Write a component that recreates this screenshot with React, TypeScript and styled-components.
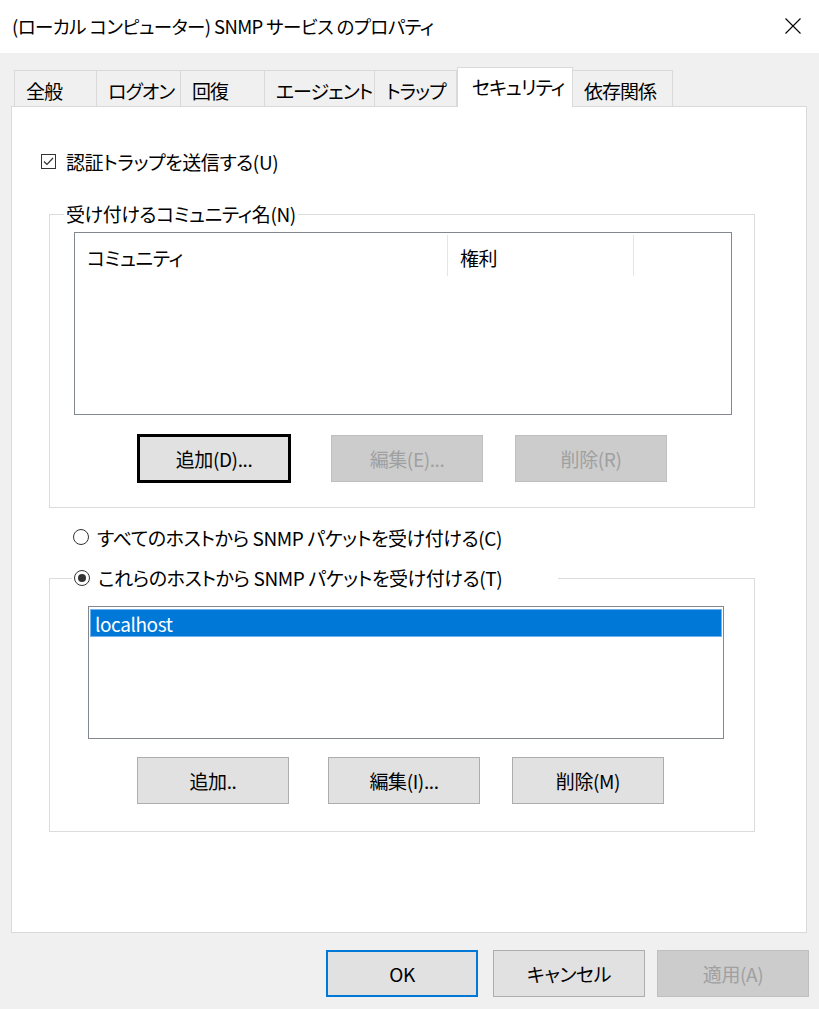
import React from "react";
import styled, { createGlobalStyle } from "styled-components";

const Global = createGlobalStyle`
  html, body { margin: 0; padding: 0; background: #f0f0f0; }
  body {
    font-family: "Noto Sans CJK JP", "Noto Sans", sans-serif;
    font-feature-settings: "palt";
    font-size: 19px;
    letter-spacing: -0.4px;
    color: #000;
  }
  * { box-sizing: border-box; }
`;

const Window = styled.div`
  width: 819px;
  height: 1009px;
  background: #f0f0f0;
  display: flex;
  flex-direction: column;
  overflow: hidden;
`;

const TitleBar = styled.div`
  height: 53px;
  background: #fff;
  display: flex;
  align-items: center;
  justify-content: space-between;
  padding: 0 18px 2px 12px;
  font-size: 18.5px;
  letter-spacing: -0.6px;
`;

const CloseButton = styled.div`
  width: 16px;
  height: 16px;
  display: flex;
  align-items: center;
  justify-content: center;
`;

const Body = styled.div`
  flex: 1;
  display: flex;
  flex-direction: column;
  padding: 14px 12px 0 11px;
`;

const TabStrip = styled.div`
  display: flex;
  align-items: flex-end;
  padding-left: 3px;
  height: 39px;
`;

const Tab = styled.div<{ $w: number; $active?: boolean }>`
  width: ${(p) => p.$w}px;
  height: ${(p) => (p.$active ? 40 : 36)}px;
  margin-bottom: ${(p) => (p.$active ? -1 : 0)}px;
  position: relative;
  z-index: ${(p) => (p.$active ? 1 : 0)};
  background: ${(p) => (p.$active ? "#fff" : "#f0f0f0")};
  border-top: 1px solid #d9d9d9;
  border-right: 1px solid #d9d9d9;
  border-left: ${(p) => (p.$active ? "1px solid #d9d9d9" : "none")};
  padding: ${(p) => (p.$active ? "0 0 2px 14px" : "3px 0 0 11px")};
  display: flex;
  align-items: center;
  white-space: nowrap;
  letter-spacing: -1px;
  &:first-child { border-left: 1px solid #d9d9d9; }
`;

const Panel = styled.div`
  height: 827px;
  background: #fff;
  border: 1px solid #d9d9d9;
  display: flex;
  flex-direction: column;
  align-items: flex-start;
  padding-top: 42px;
`;

const CheckRow = styled.label`
  height: 24px;
  display: flex;
  align-items: center;
  gap: 10px;
  margin-left: 29px;
  white-space: nowrap;
`;

const CheckBox = styled.span`
  width: 15px;
  height: 15px;
  border: 1px solid #333;
  background: #fff;
  display: flex;
  align-items: center;
  justify-content: center;
`;

const GroupBox = styled.fieldset<{ $top: number; $pb: number }>`
  margin: ${(p) => p.$top}px 0 0 37px;
  width: 706px;
  padding: 0 0 ${(p) => p.$pb}px 0;
  border: 1px solid #dcdcdc;
  min-width: 0;
`;

const Legend = styled.legend<{ $w?: number }>`
  margin-left: ${(p) => (p.$w ? 22 : 14)}px;
  padding: 0 2px;
  height: 24px;
  line-height: 24px;
  white-space: nowrap;
  ${(p) => (p.$w ? `width: ${p.$w}px; display: flex; align-items: center;` : "")}
`;

const ListView = styled.div`
  margin: 6px 0 0 24px;
  width: 658px;
  height: 183px;
  border: 1px solid #828790;
  background: #fff;
`;

const HeaderRow = styled.div`
  display: flex;
  height: 43px;
  padding-top: 2px;
`;

const HeaderCell = styled.div<{ $w: number }>`
  width: ${(p) => p.$w}px;
  border-right: 1px solid #e5e5e5;
  padding: 4px 0 0 12px;
  display: flex;
  align-items: center;
  white-space: nowrap;
`;

const ButtonRow = styled.div<{ $top: number; $left: number }>`
  display: flex;
  margin: ${(p) => p.$top}px 0 0 ${(p) => p.$left}px;
`;

const Button = styled.button<{ $ml?: number; $focus?: boolean; $default?: boolean }>`
  width: 152px;
  height: 47px;
  margin-left: ${(p) => p.$ml ?? 0}px;
  font-family: inherit;
  font-feature-settings: "palt";
  font-size: 19px;
  letter-spacing: -0.4px;
  color: #000;
  background: #e1e1e1;
  border: 1px solid #adadad;
  padding: 0;
  white-space: nowrap;
  ${(p) => (p.$focus ? "border: 2px solid #000; box-shadow: 0 0 0 1px #000;" : "")}
  ${(p) => (p.$default ? "border: 2px solid #0078d7;" : "")}
  &:disabled {
    background: #cccccc;
    border-color: #bfbfbf;
    color: #a0a0a0;
  }
`;

const RadioRow = styled.label<{ $ml?: number; $mt?: number }>`
  height: 24px;
  display: flex;
  align-items: center;
  gap: 8px;
  margin: ${(p) => p.$mt ?? 0}px 0 0 ${(p) => p.$ml ?? 0}px;
  white-space: nowrap;
`;

const RadioCircle = styled.span<{ $on?: boolean }>`
  width: 16px;
  height: 16px;
  border-radius: 50%;
  border: 1px solid #333;
  background: #fff;
  display: flex;
  align-items: center;
  justify-content: center;
  &::after {
    content: "";
    display: ${(p) => (p.$on ? "block" : "none")};
    width: 8px;
    height: 8px;
    border-radius: 50%;
    background: #333;
  }
`;

const ListBox = styled.div`
  margin: 16px 0 0 38px;
  width: 636px;
  height: 133px;
  border: 1px solid #828790;
  background: #fff;
  padding: 2px 1px 0 1px;
`;

const ListItem = styled.div<{ $sel?: boolean }>`
  height: 28px;
  display: flex;
  align-items: center;
  padding-left: 4px;
  background: ${(p) => (p.$sel ? "#0078d7" : "transparent")};
  color: ${(p) => (p.$sel ? "#fff" : "#000")};
  border: 1px solid ${(p) => (p.$sel ? "#6fb2ec" : "transparent")};
`;

const Footer = styled.div`
  display: flex;
  justify-content: flex-end;
  margin: 17px -2px 0 0;
`;

const tabs = [
  { label: "全般", w: 83 },
  { label: "ログオン", w: 84 },
  { label: "回復", w: 84 },
  { label: "エージェント", w: 110 },
  { label: "トラップ", w: 82 },
  { label: "セキュリティ", w: 116, active: true },
  { label: "依存関係", w: 100 },
];

export default function App() {
  return (
    <>
      <Global />
      <Window>
        <TitleBar>
          <span>(ローカル コンピューター) SNMP サービス のプロパティ</span>
          <CloseButton>
            <svg width="16" height="16" viewBox="0 0 16 16">
              <path d="M0.5 0.5 L15.5 15.5 M15.5 0.5 L0.5 15.5" stroke="#000" strokeWidth="1.1" fill="none" />
            </svg>
          </CloseButton>
        </TitleBar>
        <Body>
          <TabStrip>
            {tabs.map((t) => (
              <Tab key={t.label} $w={t.w} $active={t.active}>
                {t.label}
              </Tab>
            ))}
          </TabStrip>
          <Panel>
            <CheckRow>
              <CheckBox>
                <svg width="13" height="13" viewBox="0 0 13 13">
                  <path d="M2 6.5 L5 9.5 L11 3" stroke="#333" strokeWidth="1.2" fill="none" />
                </svg>
              </CheckBox>
              認証トラップを送信する(U)
            </CheckRow>

            <GroupBox $top={29} $pb={25}>
              <Legend>受け付けるコミュニティ名(N)</Legend>
              <ListView>
                <HeaderRow>
                  <HeaderCell $w={373}>コミュニティ</HeaderCell>
                  <HeaderCell $w={186}>権利</HeaderCell>
                </HeaderRow>
              </ListView>
              <ButtonRow $top={20} $left={88}>
                <Button $focus>追加(D)...</Button>
                <Button $ml={41} disabled>編集(E)...</Button>
                <Button $ml={32} disabled>削除(R)</Button>
              </ButtonRow>
            </GroupBox>

            <RadioRow $ml={61} $mt={17}>
              <RadioCircle />
              すべてのホストから SNMP パケットを受け付ける(C)
            </RadioRow>

            <GroupBox $top={17} $pb={27}>
              <Legend $w={486}>
                <RadioRow>
                  <RadioCircle $on />
                  これらのホストから SNMP パケットを受け付ける(T)
                </RadioRow>
              </Legend>
              <ListBox>
                <ListItem $sel>localhost</ListItem>
              </ListBox>
              <ButtonRow $top={18} $left={87}>
                <Button>追加..</Button>
                <Button $ml={39}>編集(I)...</Button>
                <Button $ml={32}>削除(M)</Button>
              </ButtonRow>
            </GroupBox>
          </Panel>
          <Footer>
            <Button $default>OK</Button>
            <Button $ml={15}>キャンセル</Button>
            <Button $ml={12} disabled>適用(A)</Button>
          </Footer>
        </Body>
      </Window>
    </>
  );
}
